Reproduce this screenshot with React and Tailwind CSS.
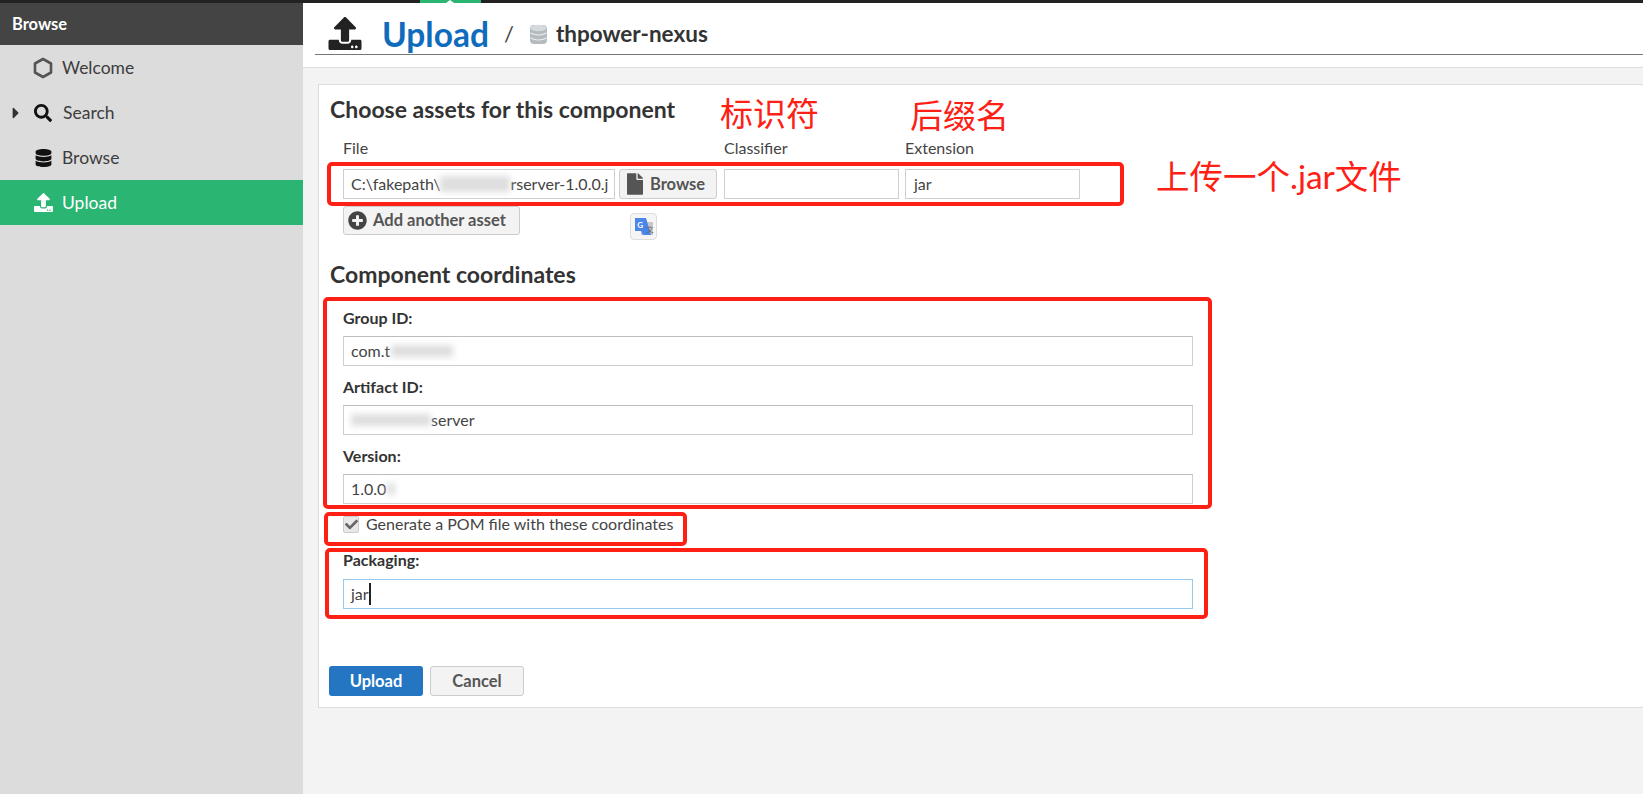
import React from "react";
import { FaSearch, FaDatabase, FaFile, FaPlusCircle, FaUpload, FaCaretRight, FaCheck } from "react-icons/fa";

const Red = ({ cls }) => (
  <div className={"absolute border-[4px] border-[#fe2014] rounded-[5px] pointer-events-none " + cls} />
);
const Blur = ({ cls }) => <span className={"inline-block align-middle bg-[#dedede] blur-[3px] " + cls} />;

function NavItem({ icon, label, active, caret, gap = "ml-[9px]" }) {
  return (
    <div className={"relative flex h-[45px] items-center pl-[33px] text-[17.5px] " + (active ? "bg-[#2ab573] text-white" : "text-[#3d3d3d]")}>
      {caret && <FaCaretRight className="absolute left-[8px] top-[14px] text-[#333] w-[16px] h-[18px]" />}
      <span className="flex w-[20px] justify-center">{icon}</span>
      <span className={"pt-[2px] " + gap}>{label}</span>
    </div>
  );
}

function Field({ label, children, focus, mt = "mt-0" }) {
  return (
    <div className={"flex flex-col " + mt}>
      <label className="flex h-[24px] items-center text-[16px] font-bold text-[#333]">{label}</label>
      <div className={"flex h-[30px] w-[850px] items-center border px-[7px] text-[16px] text-[#444] " + (focus ? "mt-[7px] border-[#97c8ee]" : "mt-[6px] border-[#cfcfcf] border-t-[#bcbcbc]")}>
        {children}
      </div>
    </div>
  );
}

export default function App() {
  return (
    <div className="relative flex h-[794px] w-[1643px] flex-col overflow-hidden bg-[#f3f3f3] text-[#333] font-['Lato','Noto_Sans_CJK_SC',sans-serif]">
      <div className="relative h-[3px] shrink-0 bg-[#222]">
        <div className="absolute left-[420px] top-0 h-[3px] w-[61px] bg-[#2ab573]" />
        <div className="absolute left-[446px] top-0 h-0 w-0 border-x-[4px] border-b-[3px] border-x-transparent border-b-white" />
      </div>
      <div className="flex min-h-0 flex-1">
        <aside className="w-[303px] shrink-0 bg-[#dcdcdc]">
          <div className="flex h-[42px] items-center bg-[#444] pl-[12px] text-[16.5px] font-bold text-white">Browse</div>
          <NavItem
            label="Welcome"
            icon={
              <svg width="20" height="22" viewBox="0 0 20 22" fill="none" stroke="#555" strokeWidth="2.6">
                <path d="M10 2 L18 6.5 V15.5 L10 20 L2 15.5 V6.5 Z" strokeLinejoin="round" />
              </svg>
            }
          />
          <NavItem label="Search" caret gap="ml-[10px]" icon={<FaSearch className="h-[18px] w-[18px] text-[#111]" />} />
          <NavItem label="Browse" icon={<FaDatabase className="h-[18px] w-[17px] text-[#111]" />} />
          <NavItem label="Upload" active icon={<FaUpload className="h-[19px] w-[19px] text-white" />} />
        </aside>
        <main className="flex min-w-0 flex-1 flex-col">
          <header className="h-[65px] shrink-0 border-b border-[#ddd] bg-white pl-[12px]">
            <div className="flex h-[52px] items-center border-b border-[#777] pt-[10px]">
              <FaUpload className="ml-[13px] h-[33px] w-[34px] text-[#222]" />
              <span className="ml-[20px] pt-[1px] text-[33.5px] font-bold text-[#0f6cbd]">Upload</span>
              <span className="ml-[15px] text-[22px] text-[#444]">/</span>
              <svg className="ml-[15px]" width="19" height="22" viewBox="0 0 19 22">
                <rect x="1" y="2" width="17" height="19" rx="4" fill="#b4bcc0" />
                <ellipse cx="9.5" cy="5" rx="8" ry="3.2" fill="#d5dadc" />
                <path d="M1.5 10 q8 4 16 0 M1.5 15 q8 4 16 0" stroke="#eef0f1" strokeWidth="1.2" fill="none" />
              </svg>
              <span className="ml-[8px] pt-[1px] text-[22.5px] font-bold text-[#333]">thpower-nexus</span>
            </div>
          </header>
          <section className="ml-[15px] mt-[16px] h-[624px] border border-r-0 border-[#ddd] bg-white pl-[11px]">
            <h2 className="mt-[11px] flex h-[26px] items-center text-[23px] font-bold leading-none text-[#333]">Choose assets for this component</h2>
            <div className="ml-[13px] mt-[17px] flex h-[17px] items-center text-[16px] text-[#444]">
              <span className="w-[381px]">File</span>
              <span className="w-[181px]">Classifier</span>
              <span>Extension</span>
            </div>
            <div className="ml-[13px] mt-[13px] flex h-[30px]">
              <div className="flex h-[30px] w-[272px] items-center overflow-hidden whitespace-nowrap border border-[#cfcfcf] px-[7px] text-[16px] text-[#444]">
                C:\fakepath\<Blur cls="h-[16px] w-[70px] shrink-0" />rserver-1.0.0.j
              </div>
              <button className="ml-[4px] flex h-[30px] w-[98px] items-center rounded-[3px] border border-[#ccc] bg-[#f3f3f3] pl-[7px] text-[16.5px] font-bold text-[#555]">
                <FaFile className="h-[22px] w-[16px] text-[#555]" />
                <span className="ml-[7px]">Browse</span>
              </button>
              <div className="ml-[7px] h-[30px] w-[175px] border border-[#cfcfcf]" />
              <div className="ml-[6px] flex h-[30px] w-[175px] items-center border border-[#cfcfcf] px-[8px] text-[16px] text-[#444]">jar</div>
            </div>
            <button className="ml-[13px] mt-[7px] flex h-[29px] w-[177px] items-center rounded-[3px] border border-[#ccc] bg-[#f3f3f3] pl-[4px] text-[16.5px] font-bold text-[#555]">
              <FaPlusCircle className="h-[19px] w-[19px] text-[#444]" />
              <span className="ml-[6px]">Add another asset</span>
            </button>
            <h2 className="mt-[26px] flex h-[26px] items-center text-[23px] font-bold leading-none text-[#333]">Component coordinates</h2>
            <div className="ml-[13px] mt-[19px] flex flex-col">
              <Field label="Group ID:">
                com.t<Blur cls="ml-[1px] h-[12px] w-[62px]" />
              </Field>
              <Field label="Artifact ID:" mt="mt-[9px]">
                <Blur cls="h-[12px] w-[80px]" />server
              </Field>
              <Field label="Version:" mt="mt-[9px]">
                1.0.0<Blur cls="ml-[1px] h-[12px] w-[8px]" />
              </Field>
              <div className="mt-[10px] flex h-[20px] items-center">
                <span className="flex h-[17px] w-[16px] items-center justify-center rounded-[2px] border border-[#ccc] bg-[#e8e8e8]">
                  <FaCheck className="h-[13px] w-[13px] text-[#666]" />
                </span>
                <span className="ml-[7px] text-[16px] text-[#444]">Generate a POM file with these coordinates</span>
              </div>
              <div className="mt-[14px]">
                <Field label="Packaging:" focus>
                  jar<span className="h-[22px] w-[2px] bg-[#222]" />
                </Field>
              </div>
            </div>
            <div className="-ml-px mt-[57px] flex">
              <button className="h-[30px] w-[94px] rounded-[3px] bg-[#2476c3] text-[16.5px] font-bold text-white">Upload</button>
              <button className="ml-[7px] h-[30px] w-[94px] rounded-[3px] border border-[#ccc] bg-[#f3f3f3] text-[16.5px] font-bold text-[#555]">Cancel</button>
            </div>
          </section>
        </main>
      </div>

      {/* annotations drawn over the page */}
      <Red cls="left-[327px] top-[162px] h-[44px] w-[797px]" />
      <Red cls="left-[323px] top-[297px] h-[212px] w-[889px]" />
      <Red cls="left-[324px] top-[512px] h-[34px] w-[363px]" />
      <Red cls="left-[325px] top-[548px] h-[71px] w-[883px]" />
      <span className="absolute left-[720px] top-[90px] text-[33px] leading-[46px] text-[#fe2014]">标识符</span>
      <span className="absolute left-[910px] top-[92px] text-[33px] leading-[46px] text-[#fe2014]">后缀名</span>
      <span className="absolute left-[1156px] top-[154px] text-[33.5px] leading-[44px] text-[#fe2014]">上传一个.jar文件</span>
      <div className="absolute left-[630px] top-[213px] flex h-[27px] w-[27px] items-center justify-center rounded-[4px] border border-[#ddd] bg-[#f5f5f5]">
        <svg width="20" height="20" viewBox="0 0 20 20">
          <rect x="7" y="5" width="12" height="13" fill="#c8c8c8" />
          <path d="M1 1 H12 L17 18 H9 L7 14 H1 Z" fill="#4a86e8" />
          <text x="3.2" y="10.5" fontSize="8" fontWeight="700" fill="#fff">G</text>
          <text x="12.5" y="15" fontSize="7" fill="#666">文</text>
        </svg>
      </div>
    </div>
  );
}
